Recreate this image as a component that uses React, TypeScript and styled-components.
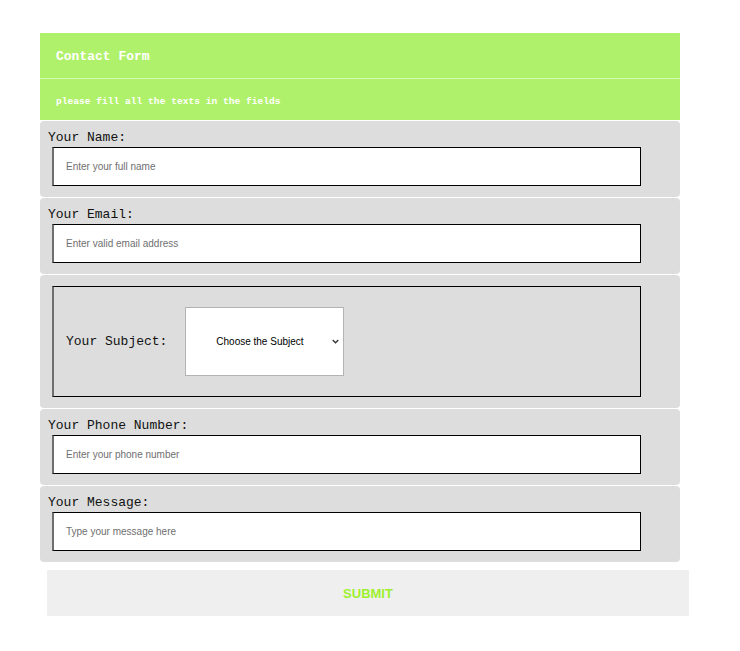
import styled, { createGlobalStyle } from "styled-components";

const GlobalStyle = createGlobalStyle`
	body {
		margin: 0;
		background: #ffffff;
		font-family: "Liberation Mono", "Courier New", monospace;
	}
`;

const Container = styled.form`
	width: 640px;
	margin: 33px 0 0 40px;
`;

const Header = styled.div`
	background-color: #b0f16b;
`;
const Title = styled.h1`
	margin: 0;
	box-sizing: border-box;
	height: 46px;
	display: flex;
	align-items: center;
	padding: 2px 0 0 16px;
	font-size: 13px;
	font-weight: 700;
	color: #ffffff;
	border-bottom: 1px solid #d4f8ad;
`;
const Subtitle = styled.p`
	margin: 0;
	box-sizing: border-box;
	height: 41px;
	display: flex;
	align-items: center;
	padding: 3px 0 0 16px;
	font-size: 9.6px;
	font-weight: 700;
	color: #ffffff;
`;

const Field = styled.div`
	background-color: #dcdddc;
	border-radius: 4px;
	padding: 5px 8px 11px;
	margin-top: 1px;
	&:first-of-type {
		margin-top: 0;
	}
`;
const Label = styled.label`
	display: block;
	font-size: 13px;
	line-height: 21px;
	padding-top: 1px;
	margin-bottom: -1px;
	color: #111;
`;
const Input = styled.input`
	display: block;
	box-sizing: border-box;
	width: 589px;
	height: 39px;
	margin-left: 4px;
	padding: 0 12px;
	background: #fff;
	border: 1px solid #000;
	border-left: 2px solid #6e6e6e;
	font-family: "Liberation Sans", Arial, sans-serif;
	font-size: 10px;
	outline: none;
	&::placeholder {
		color: #6f6f6f;
	}
`;

const SubjectField = styled(Field)`
	padding: 11px 39px 11px 12px;
`;
const Fieldset = styled.fieldset`
	margin: 0;
	box-sizing: border-box;
	height: 111px;
	display: flex;
	align-items: center;
	gap: 18px;
	padding: 0 12px;
	border: 1px solid #000;
	border-left: 2px solid #6e6e6e;
`;
const SubjectLabel = styled.label`
	font-size: 13px;
	color: #111;
`;
const SelectWrap = styled.div`
	position: relative;
	display: flex;
	svg {
		position: absolute;
		right: 5px;
		top: 32px;
		pointer-events: none;
	}
`;
const Select = styled.select`
	box-sizing: border-box;
	width: 159px;
	height: 69px;
	padding: 0 14px 0 4px;
	background: #fff;
	border: 1px solid #b3b3b3;
	border-radius: 0;
	appearance: none;
	text-align: center;
	font-family: "Liberation Sans", Arial, sans-serif;
	font-size: 10px;
	color: #000;
`;

const Submit = styled.button`
	display: block;
	box-sizing: border-box;
	width: 642px;
	height: 46px;
	margin: 8px 0 0 7px;
	background: #efefef;
	border: none;
	font-family: "Liberation Sans", Arial, sans-serif;
	font-size: 13px;
	font-weight: 700;
	color: #9ef02e;
	cursor: pointer;
`;

const fields = [
	{ id: "name", label: "Your Name:", placeholder: "Enter your full name" },
	{ id: "email", label: "Your Email:", placeholder: "Enter valid email address" },
];
const fieldsAfter = [
	{ id: "phone", label: "Your Phone Number:", placeholder: "Enter your phone number" },
	{ id: "message", label: "Your Message:", placeholder: "Type your message here" },
];

export default function App() {
	return (
		<>
			<GlobalStyle />
			<Container onSubmit={(e) => e.preventDefault()}>
				<Header>
					<Title>Contact Form</Title>
					<Subtitle>please fill all the texts in the fields</Subtitle>
				</Header>
				{fields.map((f) => (
					<Field key={f.id}>
						<Label htmlFor={f.id}>{f.label}</Label>
						<Input id={f.id} placeholder={f.placeholder} />
					</Field>
				))}
				<SubjectField>
					<Fieldset>
						<SubjectLabel htmlFor="subject">Your Subject:</SubjectLabel>
						<SelectWrap>
							<Select id="subject" defaultValue="">
								<option value="">Choose the Subject</option>
								<option value="general">General</option>
								<option value="support">Support</option>
							</Select>
							<svg width="7" height="5" viewBox="0 0 7 5">
								<path
									d="M0.7 1 L3.5 3.8 L6.3 1"
									fill="none"
									stroke="#333"
									strokeWidth="1.3"
								/>
							</svg>
						</SelectWrap>
					</Fieldset>
				</SubjectField>
				{fieldsAfter.map((f) => (
					<Field key={f.id}>
						<Label htmlFor={f.id}>{f.label}</Label>
						<Input id={f.id} placeholder={f.placeholder} />
					</Field>
				))}
				<Submit type="submit">SUBMIT</Submit>
			</Container>
		</>
	);
}
